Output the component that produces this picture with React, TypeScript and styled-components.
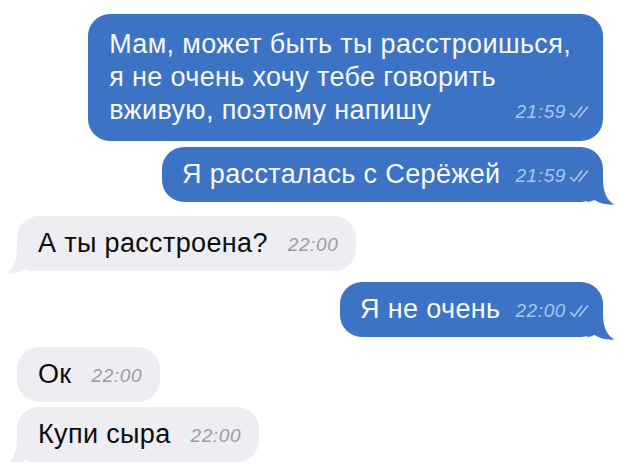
import React from "react";
import styled, { createGlobalStyle } from "styled-components";

const GlobalStyle = createGlobalStyle`
  html, body { margin: 0; padding: 0; background: #ffffff; }
  body { font-family: "Liberation Sans", Arial, sans-serif; }
`;

const BLUE = "#3c73c5";
const GRAY = "#ededf2";

const Chat = styled.div`
  display: flex;
  flex-direction: column;
  padding: 14px 17px 0;
  width: 620px;
  box-sizing: border-box;
`;

const Row = styled.div<{ $out: boolean; $gap: number }>`
  display: flex;
  justify-content: ${(p) => (p.$out ? "flex-end" : "flex-start")};
  margin-top: ${(p) => p.$gap}px;
`;

const Bubble = styled.div<{ $out: boolean; $stack: boolean }>`
  position: relative;
  display: flex;
  flex-direction: column;
  padding: ${(p) =>
    p.$stack ? "14px 32px 14px 21px" : p.$out ? "11px 13px 11px 20px" : "11px 18px 11px 21px"};
  background: ${(p) => (p.$out ? BLUE : GRAY)};
  color: ${(p) => (p.$out ? "#f6f9ff" : "#0c0c0e")};
  border-radius: 22px;
`;

const Line = styled.div`
  font-size: 27px;
  line-height: 33px;
  letter-spacing: 0.35px;
  white-space: nowrap;
`;

const LastLine = styled.div<{ $out: boolean }>`
  display: flex;
  align-items: flex-end;
  justify-content: space-between;
  gap: ${(p) => (p.$out ? 15 : 20)}px;
`;

const Meta = styled.div<{ $out: boolean; $stack: boolean }>`
  display: flex;
  align-items: center;
  gap: 3px;
  margin-right: ${(p) => (p.$stack ? -19 : 0)}px;
  padding-bottom: 4px;
  font-size: 19px;
  line-height: 22px;
  font-style: italic;
  letter-spacing: 0.6px;
  color: ${(p) => (p.$out ? "#a9c5ef" : "#9d9da3")};
  white-space: nowrap;
`;

const Tail = styled.svg<{ $out: boolean }>`
  position: absolute;
  bottom: -3px;
  ${(p) => (p.$out ? "right: -12px;" : "left: -12px; transform: scaleX(-1);")}
  width: 28px;
  height: 26px;
`;

const Checks = () => (
  <svg width="21" height="14" viewBox="0 0 21 14" fill="none">
    <path
      d="M1.8 8.6 L5.2 12.2 L12.8 2 M10.2 12.2 L18.6 2"
      stroke="#a9c5ef"
      strokeWidth="1.6"
      strokeLinecap="round"
      strokeLinejoin="round"
    />
  </svg>
);

type Msg = {
  lines: string[];
  time: string;
  out: boolean;
  tail: boolean;
  gap: number;
  stack?: boolean;
};

const messages: Msg[] = [
  {
    lines: ["Мам, может быть ты расстроишься,", "я не очень хочу тебе говорить", "вживую, поэтому напишу"],
    time: "21:59",
    out: true,
    tail: false,
    gap: 0,
    stack: true,
  },
  { lines: ["Я рассталась с Серёжей"], time: "21:59", out: true, tail: true, gap: 6 },
  { lines: ["А ты расстроена?"], time: "22:00", out: false, tail: true, gap: 14 },
  { lines: ["Я не очень"], time: "22:00", out: true, tail: true, gap: 11 },
  { lines: ["Ок"], time: "22:00", out: false, tail: false, gap: 10 },
  { lines: ["Купи сыра"], time: "22:00", out: false, tail: true, gap: 5 },
];

export default function App() {
  return (
    <>
      <GlobalStyle />
      <Chat>
        {messages.map((m, i) => {
          const head = m.lines.slice(0, -1);
          const last = m.lines[m.lines.length - 1];
          return (
            <Row key={i} $out={m.out} $gap={m.gap}>
              <Bubble $out={m.out} $stack={!!m.stack}>
                {head.map((l, j) => (
                  <Line key={j}>{l}</Line>
                ))}
                <LastLine $out={m.out}>
                  <Line>{last}</Line>
                  <Meta $out={m.out} $stack={!!m.stack}>
                    <span>{m.time}</span>
                    {m.out && <Checks />}
                  </Meta>
                </LastLine>
                {m.tail && (
                  <Tail $out={m.out} viewBox="0 0 28 26">
                    <path
                      d="M0 0 H16 C16 13 20 21.5 27.5 25.6 C19.5 26 12.5 24.5 7.5 21 C5 22.3 2.5 23 0 23 Z"
                      fill={m.out ? BLUE : GRAY}
                    />
                  </Tail>
                )}
              </Bubble>
            </Row>
          );
        })}
      </Chat>
    </>
  );
}
